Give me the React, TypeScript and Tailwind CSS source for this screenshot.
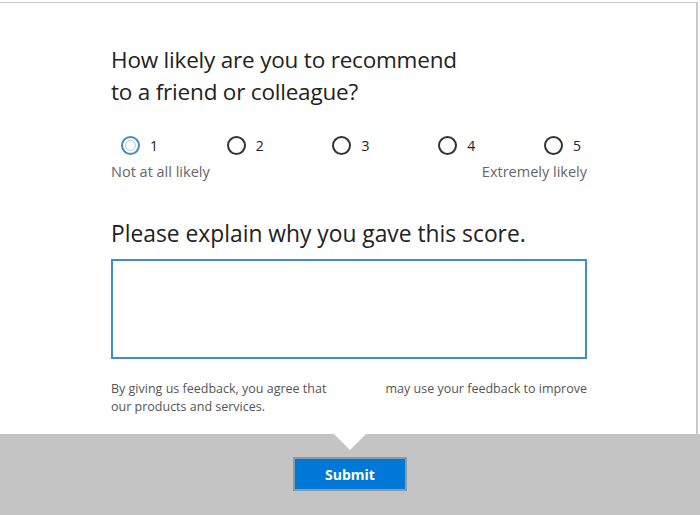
import React, { useState } from 'react';

const font = { fontFamily: '"Open Sans", "Noto Sans", sans-serif' };

export default function App() {
  const [score, setScore] = useState<number | null>(null);
  const [comment, setComment] = useState('');

  return (
    <div className="w-[700px] h-[515px] flex flex-col bg-white overflow-hidden" style={font}>
      {/* Survey panel */}
      <div className="flex-1 flex flex-col mt-[2px] border-t border-r-2 border-[#c8c8c8] mr-[2px] pl-[111px] pr-[109px]">
        <h1 className="mt-[41px] text-[22.5px] leading-[32px] text-[#222] tracking-[-0.2px]">
          How likely are you to recommend
          <br />
          to a friend or colleague?
        </h1>

        <div className="mt-[27px] flex justify-between pl-[10px] pr-[6px]">
          {[1, 2, 3, 4, 5].map((n) => (
            <label key={n} className="flex items-center gap-[10px] cursor-pointer">
              <input
                type="radio"
                name="score"
                className="sr-only"
                checked={score === n}
                onChange={() => setScore(n)}
              />
              {n === 1 ? (
                <span className="w-[19px] h-[19px] rounded-full border-2 border-[#3d8fc4] flex items-center justify-center">
                  <span className="w-[11px] h-[11px] rounded-full border border-[#c4c4c4]" />
                </span>
              ) : (
                <span className="w-[19px] h-[19px] rounded-full border-2 border-[#333]" />
              )}
              <span className="text-[14px] text-[#222]">{n}</span>
            </label>
          ))}
        </div>
        <div className="mt-[5px] flex justify-between text-[14.5px] text-[#666]">
          <span>Not at all likely</span>
          <span>Extremely likely</span>
        </div>

        <h2 className="mt-[35px] text-[22.8px] leading-[32px] text-[#222]">
          Please explain why you gave this score.
        </h2>
        <textarea
          value={comment}
          onChange={(e) => setComment(e.target.value)}
          className="mt-[9px] h-[100px] w-full border-2 border-[#3d8fc4] resize-none outline-none px-2 py-1 text-[14px]"
        />

        <div className="mt-[21px] flex justify-between text-[12.5px] leading-[18px] text-[#555]">
          <p>
            By giving us feedback, you agree that
            <br />
            our products and services.
          </p>
          <p>may use your feedback to improve</p>
        </div>
      </div>

      {/* Footer */}
      <div className="relative h-[81px] bg-[#c4c4c4] flex justify-center items-start">
        <div className="absolute left-[334px] top-0 w-0 h-0 border-l-[16px] border-r-[16px] border-t-[16px] border-l-transparent border-r-transparent border-t-white" />
        <button className="mt-[23px] w-[114px] h-[34px] bg-[#0078d7] border-2 border-[#8c9aa6] text-white text-[14px] font-bold">
          Submit
        </button>
      </div>
    </div>
  );
}
